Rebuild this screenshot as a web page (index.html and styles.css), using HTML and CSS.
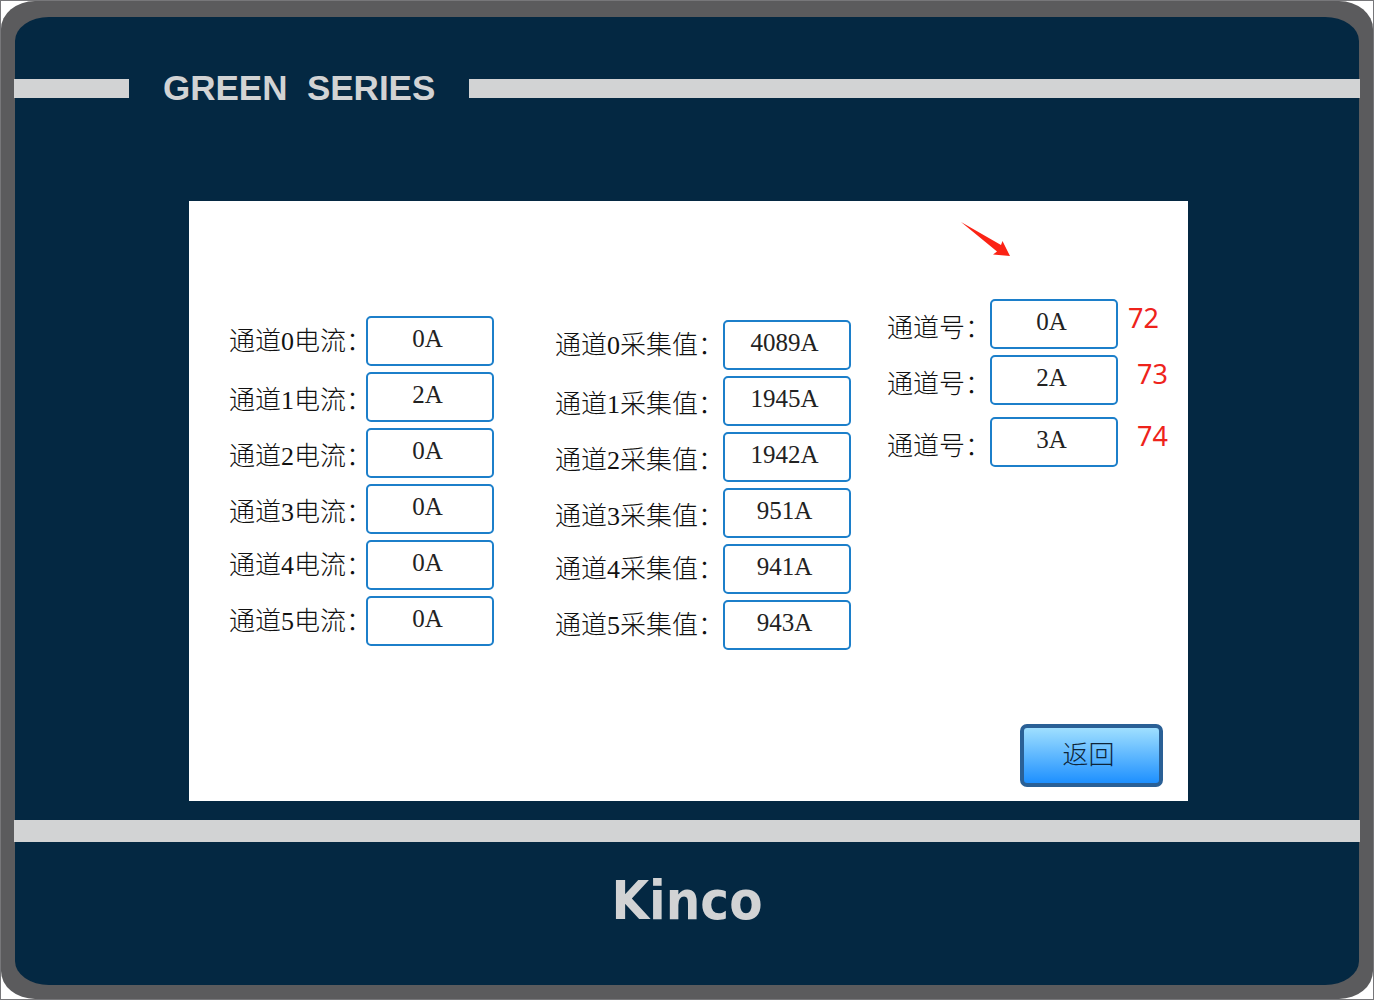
FILE: index.html
```html
<!DOCTYPE html>
<html lang="zh-CN">

<head>
    <meta charset="UTF-8" />
    <meta name="viewport" content="width=device-width, initial-scale=1.0" />
    <title>Kinco Green Series</title>
    <link rel="stylesheet" href="styles.css">
</head>

<body>

    <div class="device">
        <div class="panel">
            <header class="header">
                <div class="stripe stripe-left"></div>
                <h1 class="series">GREEN  SERIES</h1>
                <div class="stripe stripe-right"></div>
            </header>

            <main class="screen">
                <svg class="arrow" width="50" height="36" viewBox="0 0 50 36" aria-hidden="true">
                    <path d="M1 1 L41 24 L42.5 20 L50 35 L33 33.5 L37 30.5 Z" />
                </svg>

                <form class="columns">
                    <div class="column current">
                        <div class="field"><label for="i0">通道0电流：</label><input id="i0" value="0A" readonly></div>
                        <div class="field field-low"><label for="i1">通道1电流：</label><input id="i1" value="2A" readonly></div>
                        <div class="field field-low"><label for="i2">通道2电流：</label><input id="i2" value="0A" readonly></div>
                        <div class="field field-low"><label for="i3">通道3电流：</label><input id="i3" value="0A" readonly></div>
                        <div class="field"><label for="i4">通道4电流：</label><input id="i4" value="0A" readonly></div>
                        <div class="field"><label for="i5">通道5电流：</label><input id="i5" value="0A" readonly></div>
                    </div>

                    <div class="column sample">
                        <div class="field"><label for="s0">通道0采集值：</label><input id="s0" value="4089A" readonly></div>
                        <div class="field field-low"><label for="s1">通道1采集值：</label><input id="s1" value="1945A" readonly></div>
                        <div class="field field-low"><label for="s2">通道2采集值：</label><input id="s2" value="1942A" readonly></div>
                        <div class="field field-low"><label for="s3">通道3采集值：</label><input id="s3" value="951A" readonly></div>
                        <div class="field"><label for="s4">通道4采集值：</label><input id="s4" value="941A" readonly></div>
                        <div class="field"><label for="s5">通道5采集值：</label><input id="s5" value="943A" readonly></div>
                    </div>

                    <div class="column channel">
                        <div class="field"><label for="c0">通道号：</label><input id="c0" value="0A" readonly><span class="note">72</span></div>
                        <div class="field"><label for="c1">通道号：</label><input id="c1" value="2A" readonly><span class="note note-far">73</span></div>
                        <div class="field field-last"><label for="c2">通道号：</label><input id="c2" value="3A" readonly><span class="note note-far">74</span></div>
                    </div>
                </form>

                <button class="back" type="button">返回</button>
            </main>

            <footer class="footer">
                <div class="stripe stripe-bottom"></div>
                <p class="brand">Kinco</p>
            </footer>
        </div>
    </div>

</body>

</html>
```
FILE: styles.css
```css
* {
    box-sizing: border-box;
}

body {
    margin: 0;
    background: #fff;
    border: 1px solid #77777a;
    font-family: "Liberation Serif", "Noto Sans CJK SC", serif;
}

.device {
    display: flex;
    min-height: calc(100vh - 2px);
    padding: 16px 14px 14px;
    background: #5b5b5d;
    border-radius: 34px / 28px;
}

.panel {
    flex: 1;
    display: flex;
    flex-direction: column;
    background: #042842;
    border-radius: 34px / 24px;
}

.header {
    display: flex;
    align-items: center;
    height: 40px;
    margin: 51px -1px 93px;
}

.stripe {
    height: 19px;
    background: #d2d3d4;
}

.stripe-left {
    width: 115px;
}

.series {
    margin: 0 34px;
    font: bold 35px/40px "Liberation Sans", sans-serif;
    color: #d2d3d4;
    white-space: pre;
}

.stripe-right {
    flex: 1;
}

.screen {
    position: relative;
    display: flex;
    flex-direction: column;
    min-height: 600px;
    margin: 0 171px 0 174px;
    padding: 98px 0 14px 40px;
    background: #fff;
}

.arrow {
    position: absolute;
    top: 20px;
    right: 178px;
    fill: #fb2315;
}

.columns {
    flex: 1;
    display: grid;
    grid-template-columns: 326fr 332fr 301fr;
    align-items: start;
}

.column {
    display: grid;
    gap: 6px;
}

.current {
    padding-top: 17px;
}

.sample {
    padding-top: 21px;
}

.field {
    display: flex;
    align-items: center;
    height: 50px;
}

.field-last {
    margin-top: 6px;
}

.field label {
    padding-top: 2px;
    font-size: 26px;
    font-weight: 300;
    line-height: 32px;
    color: #111;
    white-space: nowrap;
}

.field-low label {
    padding-top: 7px;
}

.current label {
    width: 137px;
}

.sample label {
    width: 168px;
}

.channel label {
    width: 103px;
    padding-top: 9px;
}

.field input {
    width: 128px;
    height: 50px;
    padding: 0 5px 4px 0;
    border: 2px solid #1c7fca;
    border-radius: 5px;
    background: #fff;
    font-family: inherit;
    font-size: 25px;
    color: #222;
    text-align: center;
}

.note {
    margin: 0 0 12px 10px;
    font: 27px/30px "Noto Sans", sans-serif;
    color: #ee231b;
}

.note-far {
    margin-left: 19px;
}

.back {
    align-self: flex-end;
    width: 143px;
    height: 63px;
    margin-right: 25px;
    padding: 0 6px 6px 0;
    border: 4px solid #2a6096;
    border-radius: 7px;
    background: linear-gradient(#9fdfff, #1e90ff);
    font-family: inherit;
    font-size: 26px;
    font-weight: 300;
    color: #0d2438;
}

.footer {
    margin: 19px -1px 0;
}

.stripe-bottom {
    height: 22px;
}

.brand {
    margin: 27px 0 0;
    font: bold 54px/64px "DejaVu Sans Condensed", "DejaVu Sans", sans-serif;
    color: #d2d3d4;
    text-align: center;
}
```
